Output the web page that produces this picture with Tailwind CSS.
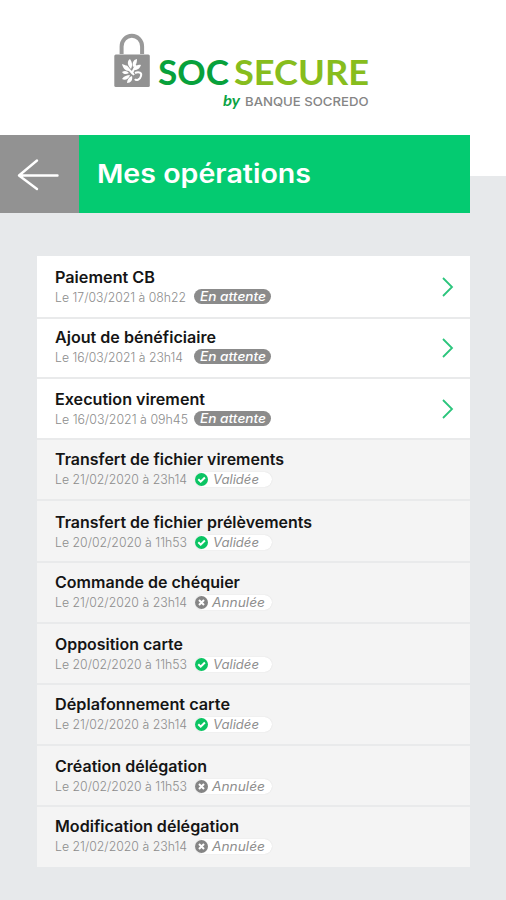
<!DOCTYPE html>
<html lang="fr">
<head>
<meta charset="utf-8">
<title>SocSecure – Mes opérations</title>
<script src="https://cdn.jsdelivr.net/npm/@tailwindcss/browser@4"></script>
</head>
<body class="w-[506px] h-[900px] overflow-hidden bg-[linear-gradient(#ffffff_176px,#e7e9eb_176px)] font-['Inter','Open_Sans',sans-serif]">
<header class="h-[135px] pl-[112px] pt-[32px]">
  <svg class="w-[260px] h-[80px]" viewBox="112 32 260 80" role="img" aria-label="SocSecure by Banque Socredo">
    <path d="M121.600 54V46.500a10 10.500 0 0 1 20.500 0V54" fill="none" stroke="#999" stroke-width="4"/>
    <rect x="114.300" y="54.500" width="35.500" height="32.500" rx="1.500" fill="#929292"/>
    <g fill="#fff">
      <path d="M131 69c-4-4-4-8-1-10 2 3 3 6 1 10zM133 67c-1-4 0-7 4-8 0 4-1 7-4 8zM129 71c-4 0-6-3-7-7 4 1 7 3 7 7zM134 70c1-4 4-6 7-5-1 3-3 5-7 5zM129 73c-3 2-6 1-7-1 3-2 5-1 7 1zM130 75c-1 4-5 6-8 4 2-3 5-4 8-4zM132 76c1 4-1 7-5 7 0-3 2-6 5-7z"/>
    </g>
    <path d="M135 73c4-2 7 0 6 3-1 4-5 5-6 3M131 71l3 4M126 66l6 7 4-8" fill="none" stroke="#fff" stroke-width="2"/>
    <g font-family="Lato, sans-serif" font-weight="700" font-size="35">
      <text x="158" y="85" textLength="71" lengthAdjust="spacingAndGlyphs" fill="#08a13b">SOC</text>
      <text x="234" y="85" textLength="135" lengthAdjust="spacingAndGlyphs" fill="#87bd1d">SECURE</text>
    </g>
    <text x="223" y="105.500" textLength="17" lengthAdjust="spacingAndGlyphs" fill="#0ca345" font-family="Lato, sans-serif" font-style="italic" font-weight="700" font-size="16">by</text>
    <text x="245" y="105.500" textLength="123.500" lengthAdjust="spacingAndGlyphs" fill="#858585" font-family="Inter, sans-serif" font-weight="500" font-size="12">BANQUE SOCREDO</text>
  </svg>
</header>
<div class="flex w-[470px] h-[78px]">
  <button class="w-[79px] bg-[#929292] flex items-center pl-[17px]" aria-label="Retour">
    <svg class="w-[42px] h-[34px]" viewBox="0 0 42 34" fill="none" stroke="#fff" stroke-width="2.400" stroke-linecap="round" stroke-linejoin="round"><path d="M20 3.500 2 18.500l18 13.500M2 18.500h38.500"/></svg>
  </button>
  <h1 class="flex-1 flex items-center bg-[#04cb71] pl-[18px] text-[26px] font-semibold text-white">
    <svg class="w-[220px] h-[40px] overflow-visible" fill="currentColor"><text x="0" y="29" textLength="214" lengthAdjust="spacingAndGlyphs">Mes opérations</text></svg>
  </h1>
</div>
<main id="list" class="mt-[43px] ml-[37px] w-[433px]"></main>
<script>
// [title, title width, date, date width, status, row height, top padding]
const operations = [
  ["Paiement CB", 100, "Le 17/03/2021 à 08h22", 131, "wait", 63, 11],
  ["Ajout de bénéficiaire", 161, "Le 16/03/2021 à 23h14", 128, "wait", 60, 8],
  ["Execution virement", 150, "Le 16/03/2021 à 09h45", 133, "wait", 61, 10],
  ["Transfert de fichier virements", 229, "Le 21/02/2020 à 23h14", 132, "ok", 61, 9],
  ["Transfert de fichier prélèvements", 257, "Le 20/02/2020 à 11h53", 132, "ok", 62, 11],
  ["Commande de chéquier", 185, "Le 21/02/2020 à 23h14", 132, "no", 61, 9],
  ["Opposition carte", 128, "Le 20/02/2020 à 11h53", 132, "ok", 61, 10],
  ["Déplafonnement carte", 175, "Le 21/02/2020 à 23h14", 132, "ok", 61, 9],
  ["Création délégation", 152, "Le 20/02/2020 à 11h53", 132, "no", 61, 10],
  ["Modification délégation", 184, "Le 21/02/2020 à 23h14", 132, "no", 60, 9]
];
// Text stretched to a nominal width; font and colour are inherited
const label = (text, width, height, baseline) => `<svg class="block overflow-visible" width="${width}" height="${height}" fill="currentColor"><text x="0" y="${baseline}" textLength="${width}" lengthAdjust="spacingAndGlyphs">${text}</text></svg>`;
const icon = (color, path) => `<svg class="w-[13px] h-[13px] shrink-0" viewBox="0 0 13 13"><circle cx="6.500" cy="6.500" r="6.500" fill="${color}"/><path d="${path}" fill="none" stroke="#fff" stroke-width="2"/></svg>`;
const badges = {
  wait: `<span class="mb-[2px] ml-[1px] w-[77px] h-[15px] pl-[6px] rounded-full bg-[#8b8b8b] text-white text-[12.5px] font-medium italic">${label("En attente", 66, 15, 11.5)}</span>`,
  ok: `<span class="mb-px ml-[2px] w-[77px] h-[15px] flex items-center gap-[5px] rounded-full bg-white text-[#8f8f8f] text-[12.5px] italic shadow-[0_0_1px_#ccc]">${icon("#0bc463", "M3.300 6.300l2.400 2.400 4.200-4.200")}${label("Validée", 46, 15, 11.5)}</span>`,
  no: `<span class="mb-px ml-[2px] w-[77px] h-[15px] flex items-center gap-[4px] rounded-full bg-white text-[#8f8f8f] text-[12.5px] italic shadow-[0_0_1px_#ccc]">${icon("#858585", "M4 4l5 5M9 4l-5 5")}${label("Annulée", 53, 15, 11.5)}</span>`
};
document.getElementById("list").innerHTML = operations.map(([title, tw, date, dw, status, h, pad], i) => `
  <article class="flex justify-between pl-[18px] pr-[16px] ${status === "wait" ? "bg-white" : "bg-[#f4f4f4]"} ${i < 9 ? "border-b-2 border-[#e9eaeb]" : ""}" style="height:${h}px">
    <div style="padding-top:${pad}px">
      <h2 class="h-[21px] text-[15.5px] font-semibold text-[#151515]">${label(title, tw, 21, 16)}</h2>
      <div class="h-[19px] flex items-center">
        <span class="w-[138px] text-[12.5px] font-light text-[#8c8c8c]">${label(date, dw, 19, 14)}</span>${badges[status]}
      </div>
    </div>
    ${status === "wait" ? `<svg class="self-center w-[14px] h-[20px]" viewBox="0 0 14 20" fill="none" stroke="#2bc57c" stroke-width="1.800"><path d="M3 1l9 9-9 9"/></svg>` : ""}
  </article>`).join("");
</script>
</body>
</html>
